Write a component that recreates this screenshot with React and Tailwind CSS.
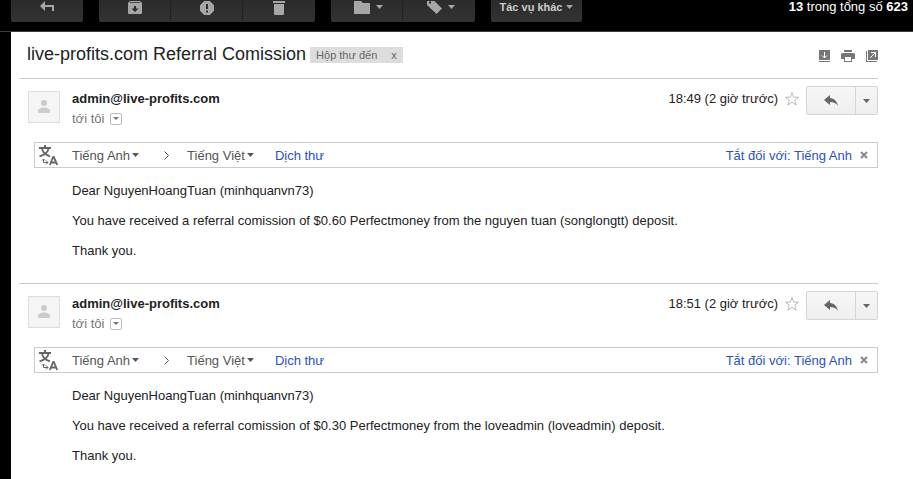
import { useState } from "react"

const messages = [
    {
        id: 1,
        from: 'admin@live-profits.com',
        time: '18:49 (2 giờ trước)',
        body: [
            'Dear NguyenHoangTuan (minhquanvn73)',
            'You have received a referral comission of $0.60 Perfectmoney from the nguyen tuan (songlongtt) deposit.',
            'Thank you.',
        ],
    },
    {
        id: 2,
        from: 'admin@live-profits.com',
        time: '18:51 (2 giờ trước)',
        body: [
            'Dear NguyenHoangTuan (minhquanvn73)',
            'You have received a referral comission of $0.30 Perfectmoney from the loveadmin (loveadmin) deposit.',
            'Thank you.',
        ],
    },
]

const Caret = ({className}) => (
    <svg className={className} width="7" height="4" viewBox="0 0 7 4" fill="currentColor" aria-hidden="true">
        <path d="M0 0h7L3.500 4z" />
    </svg>
)

const BackIcon = () => (
    <svg width="14" height="10" viewBox="0 0 14 10" fill="currentColor">
        <path d="M5 0v4h9v6h-2V6H5v4L0 5z" />
    </svg>
)

const ArchiveIcon = () => (
    <svg width="14" height="13" viewBox="0 0 14 13">
        <path fill="currentColor" fillRule="evenodd" d="M2 0h10l2 2v10a1 1 0 0 1-1 1H1a1 1 0 0 1-1-1V2zM2 1.200v.8h10v-.8zM6 5h2v2.500h2.500L7 11 3.500 7.500H6z" />
    </svg>
)

const SpamIcon = () => (
    <svg width="14" height="14" viewBox="0 0 14 14">
        <path fill="currentColor" fillRule="evenodd" d="M4.200 0h5.600L14 4.200v5.600L9.800 14H4.200L0 9.800V4.200zM6 3v5h2V3zM6 9.500v2h2v-2z" />
    </svg>
)

const TrashIcon = () => (
    <svg width="12" height="14" viewBox="0 0 12 14" fill="currentColor">
        <path d="M0 0h12v2H0zM1 3h10v10a1 1 0 0 1-1 1H2a1 1 0 0 1-1-1z" />
    </svg>
)

const FolderIcon = () => (
    <svg width="16" height="13" viewBox="0 0 16 13" fill="currentColor">
        <path d="M0 0h7l2 2h7v11H0z" />
    </svg>
)

const TagIcon = () => (
    <svg width="15" height="13" viewBox="0 0 15 13">
        <path fill="currentColor" fillRule="evenodd" d="M0 0h7.500L15 7.500 9.500 13 0 4zM2 .5v2h2v-2z" />
    </svg>
)

const DownloadIcon = () => (
    <svg width="11" height="12" viewBox="0 0 11 12">
        <path fill="currentColor" d="M0 0h11v10H0zM0 11h11v1H0z" />
        <path stroke="#fff" fill="none" d="M5.500 2v6M3 5.500l2.500 2.500L8 5.500" />
    </svg>
)

const PrintIcon = () => (
    <svg width="14" height="12" viewBox="0 0 14 12">
        <path fill="currentColor" d="M3 0h8v2H3zM1.500 3h11A1.500 1.500 0 0 1 14 4.500V9h-3v3H3V9H0V4.500A1.500 1.500 0 0 1 1.500 3z" />
        <path fill="#fff" d="M4 7h6v4H4z" />
    </svg>
)

const PopoutIcon = () => (
    <svg width="12" height="12" viewBox="0 0 12 12">
        <path fill="currentColor" d="M2 0h10v10H2zM0 1h1v10h10v1H0z" />
        <path stroke="#fff" fill="none" d="M4 8l5.500-5.500M5 2.500h4.500V7" />
    </svg>
)

const PersonIcon = () => (
    <svg width="12" height="14" viewBox="0 0 12 14" fill="currentColor">
        <circle cx="6" cy="3" r="3" />
        <path d="M0 13v-2c0-2 3-3.500 6-3.500s6 1.500 6 3.500v2z" />
    </svg>
)

const StarIcon = () => (
    <svg width="16" height="16" viewBox="0 0 16 16" fill="none" stroke="currentColor">
        <path d="M8 1.500l1.700 4.700h5l-4 3 1.500 4.900L8 11.200l-4.200 2.900 1.500-4.900-4-3h5z" />
    </svg>
)

const ReplyIcon = () => (
    <svg width="14" height="11" viewBox="0 0 14 11" fill="currentColor">
        <path d="M6 0v3c4 .3 7 3 8 8-2-3-4.500-4-8-4v3L0 5z" />
    </svg>
)

const TranslateIcon = () => (
    <svg width="19" height="22" viewBox="0 0 19 22" fill="none" stroke="currentColor">
        <path strokeWidth="2" d="M0 4h12M6 1v3" />
        <path strokeWidth="1.800" d="M3 5c1 3.500 3.500 6 8 7.300M9.500 5c-1 3.500-4 6-9 7.300" />
        <path strokeWidth="1" d="M4.500 15v3.500H9M7 16.500l2 2-2 2M3 16.500l1.500-1.500L6 16.500" />
        <path strokeWidth="1.800" d="M10.800 21l3.400-8h.6l3.400 8M12 18.500h5" />
    </svg>
)

const toolButton = 'flex h-[22px] items-start justify-center bg-linear-to-b from-[#2b2b2b] to-[#333] text-[#a6a6a6] pt-px'

const Toolbar = () => (
    <div className="flex shrink-0 items-start justify-between h-8 border-b border-[#3c3c3c] pl-[11px] pr-[5px] overflow-hidden">
        <div className="flex gap-4">
            <button type="button" aria-label="Quay lại" className={`${toolButton} w-[72px] rounded-b-xs`}>
                <BackIcon />
            </button>
            <div className="flex divide-x divide-[#222] rounded-b-xs overflow-hidden">
                <button type="button" aria-label="Lưu trữ" className={`${toolButton} w-[72px]`}><ArchiveIcon /></button>
                <button type="button" aria-label="Báo cáo spam" className={`${toolButton} w-[72px]`}><SpamIcon /></button>
                <button type="button" aria-label="Xóa" className={`${toolButton} w-[72px]`}><TrashIcon /></button>
            </div>
            <div className="flex divide-x divide-[#222] rounded-b-xs overflow-hidden">
                <button type="button" aria-label="Chuyển tới" className={`${toolButton} w-[72px] gap-1.5 pl-1`}>
                    <FolderIcon />
                    <Caret className="mt-1" />
                </button>
                <button type="button" aria-label="Nhãn" className={`${toolButton} w-[72px] gap-1.5 pl-1`}>
                    <TagIcon />
                    <Caret className="mt-1" />
                </button>
            </div>
            <button type="button" className={`${toolButton} w-[91px] gap-1 rounded-b-xs`}>
                <span className="text-[11px] leading-3 font-bold text-[#ccc]">Tác vụ khác</span>
                <Caret className="mt-1" />
            </button>
        </div>
        <p className="text-[13px] leading-[13px] text-white"><b>13</b> trong tổng số <b>623</b></p>
    </div>
)

const TranslateBar = ({onClose}) => (
    <div className="ml-[15px] mt-4 flex h-[26px] items-center border border-[#ccc] pl-1 pr-[9px] text-[#555]">
        <span className="w-[33px] text-[#666]"><TranslateIcon /></span>
        <button type="button" className="flex items-center gap-0.5">Tiếng Anh <Caret /></button>
        <svg className="ml-6 mr-[17px]" width="7" height="9" viewBox="0 0 7 9" fill="none" stroke="currentColor" aria-hidden="true">
            <path d="M1.500 .5l4 4-4 4" />
        </svg>
        <button type="button" className="flex items-center gap-0.5">Tiếng Việt <Caret /></button>
        <a href="#translate" className="ml-[21px] text-[#2a52be]">Dịch thư</a>
        <a href="#off" className="ml-auto text-[#2a52be]">Tắt đối với: Tiếng Anh</a>
        <button type="button" aria-label="Đóng" onClick={onClose} className="ml-2 text-[#888]">
            <svg width="8" height="8" viewBox="0 0 8 8" stroke="currentColor" strokeWidth="2">
                <path d="M1 1l6 6M7 1L1 7" />
            </svg>
        </button>
    </div>
)

const Message = ({message}) => {

    const [showBar, setShowBar] = useState(true)

    return (
        <article className="border-t border-[#ccc] pb-[25px]">
            <header className="flex items-start pt-[7px]">
                <div className="ml-[9px] mt-[5px] flex size-8 items-center justify-center border border-[#ddd] bg-[#f5f5f5] text-[#ccc]">
                    <PersonIcon />
                </div>
                <div className="ml-3 mt-[5px] flex-1">
                    <h2 className="font-bold">{message.from}</h2>
                    <div className="mt-[5px] flex items-center gap-1.5 text-[#777]">
                        tới tôi
                        <button type="button" aria-label="Hiển thị chi tiết" className="flex h-3 w-3 items-center justify-center rounded-xs border border-[#bbb]">
                            <svg width="6" height="3" viewBox="0 0 6 3" fill="currentColor"><path d="M0 0h6L3 3z" /></svg>
                        </button>
                    </div>
                </div>
                <time className="mt-[5px]">{message.time}</time>
                <button type="button" aria-label="Gắn dấu sao" className="ml-1.5 mt-[5px] text-[#bbb]"><StarIcon /></button>
                <div className="ml-1.5 flex h-[29px] rounded-xs border border-[#d5d5d5] bg-linear-to-b from-[#f6f6f6] to-[#efefef] text-[#666]">
                    <button type="button" aria-label="Trả lời" className="flex w-[49px] items-center justify-center border-r border-[#d5d5d5]">
                        <ReplyIcon />
                    </button>
                    <button type="button" aria-label="Khác" className="flex w-[21px] items-center justify-center"><Caret /></button>
                </div>
            </header>
            {showBar && <TranslateBar onClose={() => setShowBar(false)} />}
            <div className="ml-[53px] mt-[15px] flex flex-col gap-[15px]">
                {message.body.map(line => <p key={line}>{line}</p>)}
            </div>
        </article>
    )
}

const App = () => {

    return (
        <div className="flex h-screen flex-col bg-black font-['Liberation_Sans',Arial,sans-serif] text-[13px] leading-[15px] text-[#222]">
            <Toolbar />
            <main className="ml-[11px] flex-1 overflow-hidden bg-white pl-2 pr-[35px]">
                <div className="flex h-[46px] items-center pb-0.5 pl-2">
                    <h1 className="text-[18px] leading-5">live-profits.com Referral Comission</h1>
                    <span className="ml-1 mt-0.5 flex h-4 items-center gap-3.5 bg-[#ddd] px-1.5 text-[11px] leading-4 text-[#666]">
                        Hộp thư đến
                        <button type="button" aria-label="Xóa nhãn">x</button>
                    </span>
                    <div className="ml-auto mt-1 flex items-center gap-[11px] text-[#777]">
                        <button type="button" aria-label="Tải xuống"><DownloadIcon /></button>
                        <button type="button" aria-label="In tất cả"><PrintIcon /></button>
                        <button type="button" aria-label="Mở trong cửa sổ mới"><PopoutIcon /></button>
                    </div>
                </div>
                {messages.map(message => <Message key={message.id} message={message} />)}
            </main>
        </div>
    )
}

export default App
